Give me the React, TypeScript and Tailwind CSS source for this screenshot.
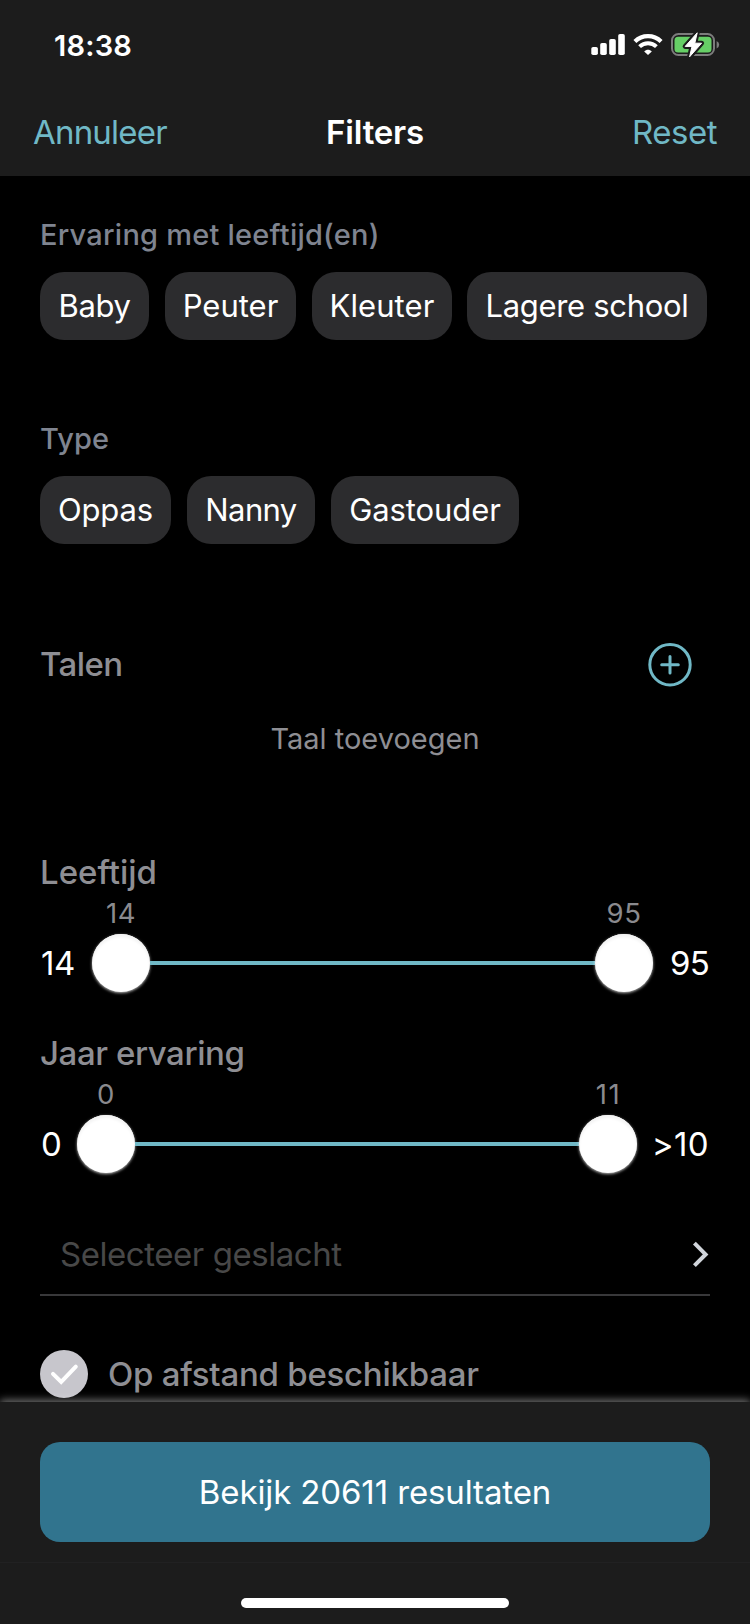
function StatusIcons() {
  return (
    <svg width="132" height="30" viewBox="0 0 132 30" className="block" aria-hidden="true">
      <g fill="#fff">
        <rect x="0.3" y="17" width="6.6" height="8" rx="1.8" />
        <rect x="9.2" y="13" width="6.6" height="12" rx="1.8" />
        <rect x="18.2" y="9" width="6.6" height="16" rx="1.8" />
        <rect x="27.2" y="4" width="6.6" height="21" rx="1.8" />
        <path d="M53.2 21.4 C55.3 19.2 58.7 19.2 60.8 21.4 L57 25 Z" />
      </g>
      <g fill="none" stroke="#fff">
        <path d="M43.9 11.4 C51.2 4.3 62.8 4.3 70.1 11.4" strokeWidth="4.2" />
        <path d="M48.6 16.6 C53.3 12.2 60.7 12.2 65.4 16.6" strokeWidth="4" />
      </g>
      <rect x="81" y="4" width="42" height="21" rx="6.5" fill="none" stroke="#7c7c7c" strokeWidth="2" />
      <rect x="83.5" y="6.8" width="37" height="15.8" rx="3.6" fill="#66cf66" />
      <path d="M125.6 11 Q128.2 12.2 128.2 14.8 Q128.2 17.4 125.6 18.6 Z" fill="#7c7c7c" />
      <path
        d="M106.2 2.8 L94.2 16.4 H101 L98.6 26.8 L110.6 13.2 H103.8 Z"
        fill="#1c1c1c"
        stroke="#1c1c1c"
        strokeWidth="5"
        strokeLinejoin="round"
      />
      <path d="M106.2 2.8 L94.2 16.4 H101 L98.6 26.8 L110.6 13.2 H103.8 Z" fill="#fff" stroke="#fff" strokeWidth="1" strokeLinejoin="round" />
    </svg>
  );
}

function Chip({ label, className }: { label: string; className: string }) {
  return (
    <button className={`flex h-[68px] items-center justify-center rounded-[24px] bg-[#2c2c2e] text-[31px] whitespace-nowrap text-white ${className}`}>
      {label}
    </button>
  );
}

function Thumb({ value, className }: { value: string; className: string }) {
  return (
    <div className="flex w-[58px] flex-col items-center gap-1.5">
      <span className={`h-[30px] text-[27.5px] leading-[31px] text-[#8a8a8e] ${className}`}>{value}</span>
      <span className="size-[58px] rounded-full bg-white shadow-[0_1px_3px_rgba(255,255,255,0.75),inset_0_3px_3px_#f3f3f3]" />
    </div>
  );
}

type RangeProps = {
  low: string;
  high: string;
  lowThumb: string;
  highThumb: string;
  lowClass: string;
  highClass: string;
  highThumbClass: string;
};

function Range({ low, high, lowThumb, highThumb, lowClass, highClass, highThumbClass }: RangeProps) {
  return (
    <div className="mt-1.5 flex h-[94px] items-end">
      <span className={`flex h-[58px] items-center pt-0.5 text-[33px] text-white ${lowClass}`}>{low}</span>
      <Thumb value={lowThumb} className="tracking-[0.6px]" />
      <div className="flex h-[58px] flex-1 items-center">
        <div className="h-1 w-full bg-[#70b8c6]" />
      </div>
      <Thumb value={highThumb} className={highThumbClass} />
      <span className={`flex h-[58px] items-center justify-end pt-0.5 text-[33px] text-white ${highClass}`}>{high}</span>
    </div>
  );
}

export default function App() {
  return (
    <div className="flex h-[1624px] w-[750px] flex-col overflow-hidden bg-black font-['Inter','Liberation_Sans',sans-serif]">
      <header className="h-[176px] shrink-0 bg-[#1c1c1c]">
        <div className="flex h-[90px] items-center justify-between pr-[27px] pl-[54px]">
          <span className="pt-px text-[29px] font-semibold tracking-[0.2px] text-white">18:38</span>
          <StatusIcons />
        </div>
        <nav className="grid h-[86px] grid-cols-3 items-center pr-[33px] pl-[33px] text-[33px]">
          <button className="text-left tracking-[-0.8px] text-[#70b8c6]">Annuleer</button>
          <h1 className="text-center font-semibold tracking-[-0.2px] text-white">Filters</h1>
          <button className="text-right tracking-[-0.5px] text-[#70b8c6]">Reset</button>
        </nav>
      </header>

      <main className="min-h-0 flex-1 overflow-hidden px-10 pt-[41px]">
        <h2 className="h-[35px] text-[29px] leading-[35px] font-medium tracking-[0.23px] text-[#7f8490]">Ervaring met leeftijd(en)</h2>
        <div className="mt-5 flex gap-4">
          <Chip label="Baby" className="w-[109px] tracking-[-0.36px]" />
          <Chip label="Peuter" className="w-[131px]" />
          <Chip label="Kleuter" className="w-[140px] tracking-[0.1px]" />
          <Chip label="Lagere school" className="-ml-px w-[240px] tracking-[-0.3px]" />
        </div>

        <h2 className="mt-[81px] h-[35px] text-[29px] leading-[35px] font-medium tracking-[0.1px] text-[#7f8490]">Type</h2>
        <div className="mt-5 flex gap-4">
          <Chip label="Oppas" className="w-[131px] tracking-[-0.1px]" />
          <Chip label="Nanny" className="w-[128px] tracking-[-0.6px]" />
          <Chip label="Gastouder" className="w-[188px] tracking-[-0.1px]" />
        </div>

        <div className="mt-[98px] flex h-11 items-center justify-between pr-[18.5px]">
          <h2 className="pt-0.5 text-[33px] font-medium tracking-[-0.6px] text-[#8e8e93]">Talen</h2>
          <svg width="44" height="45" viewBox="0 0 44 45" fill="none" stroke="#70b8c6" strokeWidth="3" strokeLinecap="round">
            <circle cx="22" cy="22.7" r="20.2" />
            <path d="M13.7 22.7 H30.3 M22 14.4 V31" />
          </svg>
        </div>
        <p className="mt-[35px] h-9 text-center text-[29px] leading-9 text-[#8e8e93]">Taal toevoegen</p>

        <h2 className="mt-[95px] h-10 text-[33px] leading-10 font-medium text-[#8e8e93]">Leeftijd</h2>
        <Range
          low="14" high="95" lowThumb="14" highThumb="95"
          lowClass="w-[52px] pl-px tracking-[-0.4px]"
          highClass="w-[57px] tracking-[-0.8px] pr-px"
          highThumbClass="tracking-[0.6px]"
        />

        <h2 className="mt-[41px] h-10 text-[33px] leading-10 font-medium tracking-[-0.42px] text-[#8e8e93]">Jaar ervaring</h2>
        <Range
          low="0" high=">10" lowThumb="0" highThumb="11"
          lowClass="w-[37px] pl-px"
          highClass="w-[73px] tracking-[0.4px] pr-px"
          highThumbClass="pl-px tracking-[1.6px]"
        />

        <button className="mt-[41px] flex h-[82px] w-full items-center justify-between border-b-2 border-[#38383a] pr-0 pl-5 text-[33px] tracking-[-0.45px] text-[#484848]">
          <span className="pt-0.5">Selecteer geslacht</span>
          <svg width="18" height="28" viewBox="0 0 18 28" fill="none" stroke="#d1d5db" strokeWidth="4">
            <path d="M2.4 3.2 L13.6 14.4 L2.4 25.6" />
          </svg>
        </button>

        <label className="mt-[54px] flex h-12 items-center">
          <svg width="48" height="48" viewBox="0 0 48 48" className="shrink-0">
            <circle cx="24" cy="24" r="24" fill="#c7c6cc" />
            <path d="M13 23.8 L21.2 32 L35.8 16.7" fill="none" stroke="#fff" strokeWidth="4" strokeLinecap="round" />
          </svg>
          <span className="pt-0.5 pl-5 text-[33px] font-medium tracking-[-0.25px] text-[#8e8e93]">Op afstand beschikbaar</span>
        </label>
      </main>

      <footer className="relative h-[222px] shrink-0 bg-[#1c1c1c] shadow-[0_-2px_8px_rgba(255,255,255,0.45)]">
        <div className="h-[160px] px-10 pt-10">
          <button className="flex h-[100px] w-full items-center justify-center rounded-[20px] bg-[#31748e] pt-0.5 text-[33px] tracking-[-0.12px] text-white">
            Bekijk 20611 resultaten
          </button>
        </div>
        <div className="flex h-[62px] justify-center border-t border-[#212122] pt-[35px]">
          <div className="h-2.5 w-[268px] rounded-full bg-white" />
        </div>
      </footer>
    </div>
  );
}
